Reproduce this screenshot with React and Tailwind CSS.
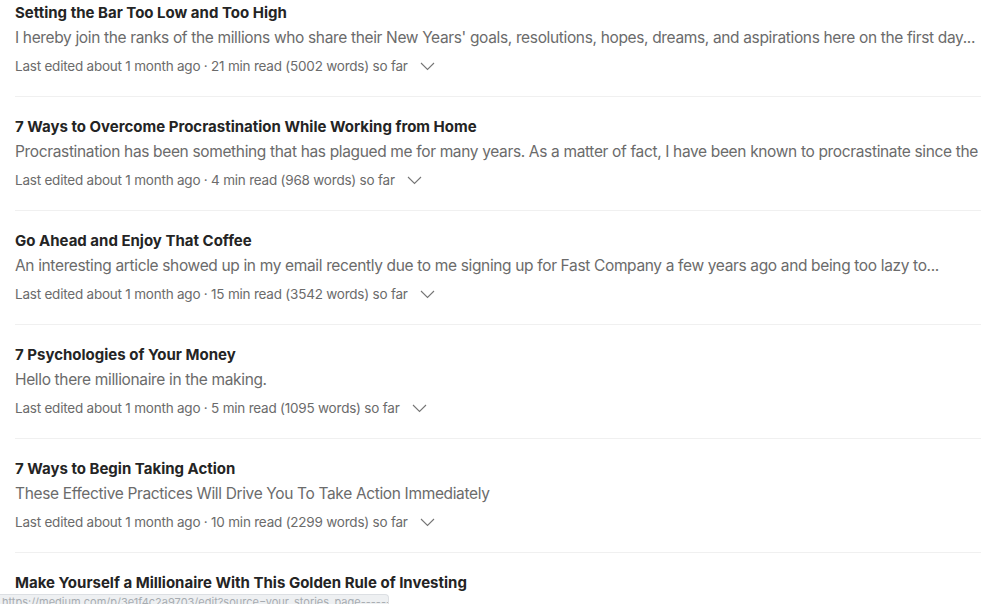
import React from "react";

const items = [
  {
    title: "Setting the Bar Too Low and Too High",
    desc: "I hereby join the ranks of the millions who share their New Years' goals, resolutions, hopes, dreams, and aspirations here on the first day...",
    meta: "Last edited about 1 month ago · 21 min read (5002 words) so far",
  },
  {
    title: "7 Ways to Overcome Procrastination While Working from Home",
    desc: "Procrastination has been something that has plagued me for many years. As a matter of fact, I have been known to procrastinate since the beginning of time...",
    meta: "Last edited about 1 month ago · 4 min read (968 words) so far",
  },
  {
    title: "Go Ahead and Enjoy That Coffee",
    desc: "An interesting article showed up in my email recently due to me signing up for Fast Company a few years ago and being too lazy to...",
    meta: "Last edited about 1 month ago · 15 min read (3542 words) so far",
  },
  {
    title: "7 Psychologies of Your Money",
    desc: "Hello there millionaire in the making.",
    meta: "Last edited about 1 month ago · 5 min read (1095 words) so far",
  },
  {
    title: "7 Ways to Begin Taking Action",
    desc: "These Effective Practices Will Drive You To Take Action Immediately",
    meta: "Last edited about 1 month ago · 10 min read (2299 words) so far",
  },
];

function Chevron() {
  return (
    <svg width="15" height="9" viewBox="0 0 15 9" fill="none" className="ml-3">
      <path d="M1 1l6.5 6.5L14 1" stroke="#757575" strokeWidth="1.1" />
    </svg>
  );
}

export default function App() {
  return (
    <div
      className="relative w-[981px] h-[604px] overflow-hidden bg-white"
      style={{ fontFamily: "Inter, 'Noto Sans', sans-serif" }}
    >
      <div className="w-[1200px] pl-[15px] pt-[3px]">
        {items.map((it, i) => (
          <div key={i}>
            <div className="text-[15px] leading-[20px] font-bold text-[#242424]">
              {it.title}
            </div>
            <div className="mt-[3px] text-[15.5px] leading-[24px] text-[#6b6b6b] whitespace-nowrap tracking-[-0.35px]">
              {it.desc}
            </div>
            <div className="mt-[6px] flex items-center text-[13.5px] leading-[20px] text-[#6b6b6b] tracking-[-0.22px]">
              <span>{it.meta}</span>
              <Chevron />
            </div>
            <div className="mt-[20px] mb-[20px] border-t border-[#f0f0f0]" />
          </div>
        ))}
        <div className="text-[15px] leading-[20px] font-bold text-[#242424]">
          Make Yourself a Millionaire With This Golden Rule of Investing
        </div>
      </div>
      <div className="absolute left-0 bottom-0 w-[389px] h-[10px] bg-[#eef0f2] rounded-tr-[4px] border-t border-r border-[#dcdfe3] overflow-hidden">
        <div className="text-[11px] leading-[10px] text-[#a7acb1] whitespace-nowrap pl-[2px] pt-[2px]">
          https://medium.com/p/3e1f4c2a9703/edit?source=your_stories_page---------
        </div>
      </div>
    </div>
  );
}
